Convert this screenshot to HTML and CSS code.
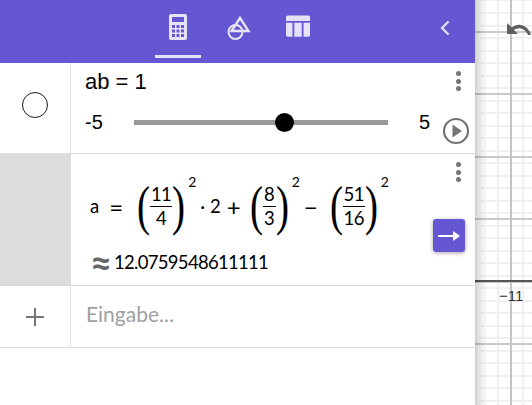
FILE: index.html

```html
<!DOCTYPE html>
<html lang="en">
<head>
  <meta charset="UTF-8">
  <title>Algebra</title>
  <link rel="stylesheet" href="styles.css">
</head>
<body>
  <div class="app">
    <div class="algebra-panel">
      <header class="toolbar">
        <div class="tabs">
          <button class="tab active">
            <svg width="18" height="26" viewBox="0 0 18 26"><path class="tab-icon" d="M2 0h14a2 2 0 0 1 2 2v22a2 2 0 0 1-2 2H2a2 2 0 0 1-2-2V2a2 2 0 0 1 2-2zM3 3v5h12V3zM3 11v3h3v-3zM7.500 11v3h3v-3zM12 11v3h3v-3zM3 15.500v3h3v-3zM7.500 15.500v3h3v-3zM12 15.500v3h3v-3zM3 20v3h3v-3zM7.500 20v3h3v-3zM12 20v3h3v-3z"/></svg>
          </button>
          <button class="tab">
            <svg width="26" height="26" viewBox="0 0 26 26"><circle cx="10.500" cy="18" r="7" fill="none" stroke="#e6e3f8" stroke-width="2"/><path d="M15 4 23.500 17H6.500z" fill="none" stroke="#e6e3f8" stroke-width="2.400"/></svg>
          </button>
          <button class="tab">
            <svg width="24" height="23" viewBox="0 0 26 24"><path class="tab-icon" d="M2 0h22a2 2 0 0 1 2 2v4H0V2a2 2 0 0 1 2-2zM0 8h7v15H2a2 2 0 0 1-2-2zM9 8h8v15H9zM19 8h7v13a2 2 0 0 1-2 2h-5z"/></svg>
          </button>
        </div>
        <svg class="collapse" width="12" height="16" viewBox="0 0 12 16"><path d="M9.500 1.500 3 8l6.500 6.500" fill="none" stroke="#e6e3f8" stroke-width="2.200"/></svg>
      </header>

      <section class="row row-slider">
        <div class="marble-col">
          <span class="marble"></span>
        </div>
        <div class="row-main">
          <div class="slider-label">ab = 1</div>
          <div class="slider-line">
            <span>-5</span>
            <div class="track"><span class="thumb"></span></div>
            <span>5</span>
          </div>
        </div>
        <div class="row-side">
          <span class="dots"><i></i><i></i><i></i></span>
          <svg class="play" width="28" height="28" viewBox="0 0 28 28"><circle cx="14" cy="14" r="12" fill="none" stroke="#757575" stroke-width="2.200"/><path d="M10.500 7.500 20 14l-9.500 6.500z" fill="#757575"/></svg>
        </div>
      </section>

      <section class="row row-formula">
        <div class="marble-col grey"></div>
        <div class="row-main">
          <div class="formula">
            <span class="var">a</span>
            <span class="eq">=</span>
            <span class="paren">(</span>
            <span class="frac frac-wide"><span>11</span><span class="den">4</span></span>
            <span class="paren">)</span>
            <sup class="pow">2</sup>
            <span class="dot">·</span>
            <span class="num">2</span>
            <span class="op plus">+</span>
            <span class="paren">(</span>
            <span class="frac"><span>8</span><span class="den">3</span></span>
            <span class="paren">)</span>
            <sup class="pow">2</sup>
            <span class="op minus">−</span>
            <span class="paren">(</span>
            <span class="frac frac-wide"><span>51</span><span class="den">16</span></span>
            <span class="paren">)</span>
            <sup class="pow">2</sup>
          </div>
          <div class="result"><span class="approx">≈</span>12.0759548611111</div>
        </div>
        <div class="row-side">
          <span class="dots"><i></i><i></i><i></i></span>
          <button class="arrow-btn">
            <svg width="22" height="10" viewBox="0 0 22 10"><path d="M0 4h15V0l7 5-7 5V6H0z" fill="#fff"/></svg>
          </button>
        </div>
      </section>

      <section class="row row-input">
        <div class="marble-col">
          <svg width="20" height="20" viewBox="0 0 20 20"><path d="M9 1h2v8h8v2h-8v8H9v-8H1V9h8z" fill="#757575"/></svg>
        </div>
        <div class="placeholder">Eingabe...</div>
      </section>
    </div>

    <div class="graphics">
      <svg class="undo" width="26" height="22" viewBox="0 0 26 22"><path d="M1 2v11h11L8 9c3-2.500 9-3 13 3l1 2h3C22 4 12 1 6 6.500z" fill="#5f5f5f"/></svg>
      <span class="tick">−11</span>
    </div>
  </div>
</body>
</html>
```

FILE: styles.css

```css
html, body {
  margin: 0;
  height: 100%;
  overflow: hidden;
  background: #fff;
}
.app {
  display: flex;
  width: 532px;
  height: 405px;
  font-family: "Liberation Sans", sans-serif;
  color: #000;
}
.algebra-panel {
  width: 475px;
  flex: none;
  display: flex;
  flex-direction: column;
}

/* Top toolbar */
.toolbar {
  height: 63px;
  flex: none;
  background-color: #6557d2;
  display: flex;
  align-items: center;
  position: relative;
}
.tabs {
  display: flex;
  margin-left: 155px;
  gap: 14px;
}
.tab {
  width: 46px;
  height: 51px;
  margin-top: 1px;
  padding: 0 0 8px;
  border: none;
  border-bottom: 3px solid transparent;
  background: transparent;
  display: flex;
  align-items: center;
  justify-content: center;
}
.tab.active {
  border-bottom-color: #e6e3f8;
}
.tab-icon {
  fill: #e6e3f8;
  fill-rule: evenodd;
}
.collapse {
  position: absolute;
  left: 439px;
  top: 20px;
}

/* Rows */
.row {
  display: flex;
  border-bottom: 1px solid #dcdcdc;
  box-sizing: border-box;
}
.row-slider {
  height: 91px;
}
.row-formula {
  height: 132px;
}
.row-input {
  height: 62px;
}
.marble-col {
  width: 70px;
  flex: none;
  border-right: 1px solid #dcdcdc;
  display: flex;
  align-items: center;
  justify-content: center;
}
.marble-col.grey {
  background-color: #dcdcdc;
}
.marble {
  width: 24px;
  height: 24px;
  margin-bottom: 6px;
  border: 1px solid #1a1a1a;
  border-radius: 50%;
}
.row-main {
  flex: 1;
  min-width: 0;
  padding-left: 14px;
}
.row-side {
  width: 34px;
  flex: none;
  display: flex;
  flex-direction: column;
  align-items: center;
}
.dots {
  display: flex;
  flex-direction: column;
  gap: 2.500px;
  margin-top: 8px;
}
.dots i {
  display: block;
  width: 5px;
  height: 5px;
  border-radius: 50%;
  background-color: #757575;
}

/* Slider row */
.slider-label {
  font-size: 22px;
  line-height: 24px;
  margin-top: 7px;
}
.slider-line {
  display: flex;
  align-items: center;
  width: 345px;
  margin-top: 17px;
  font-size: 20px;
  line-height: 22px;
}
.track {
  flex: 1;
  height: 5px;
  margin: 0 31px;
  background-color: #999;
  position: relative;
}
.thumb {
  position: absolute;
  left: 141px;
  top: -7px;
  width: 19px;
  height: 19px;
  border-radius: 50%;
  background-color: #000;
}
.play {
  margin: 26px 4px 0 0;
}

/* Formula row */
.formula {
  display: flex;
  align-items: center;
  height: 52px;
  margin-top: 26px;
  padding-left: 5px;
  font-family: "Lato", sans-serif;
  font-size: 18.500px;
  white-space: nowrap;
}
.eq {
  font-size: 24px;
  margin-left: 10px;
  margin-right: 14px;
}
.paren {
  width: 13px;
  display: flex;
  justify-content: center;
  font-family: "Liberation Serif", serif;
  font-size: 34px;
  line-height: 52px;
  transform: scale(1.15, 1.62);
}
.frac {
  width: 13px;
  display: flex;
  flex-direction: column;
  align-items: center;
  line-height: 23px;
  letter-spacing: -0.500px;
}
.frac-wide {
  width: 22px;
}
.den {
  border-top: 1px solid #000;
  align-self: stretch;
  text-align: center;
}
.pow {
  font-size: 14px;
  line-height: 14px;
  align-self: flex-start;
  margin-top: -5px;
  margin-left: 3px;
}
.dot {
  margin-left: 4px;
  margin-right: 5px;
}
.op {
  font-size: 24px;
}
.plus {
  margin-left: 6px;
  margin-right: 9px;
}
.minus {
  margin-left: 4px;
  margin-right: 12px;
}
.result {
  display: flex;
  align-items: center;
  margin-top: 18px;
  padding-left: 5px;
  font-family: "Lato", sans-serif;
  font-size: 18.500px;
  letter-spacing: -0.700px;
  line-height: 24px;
}
.approx {
  width: 24px;
  font-size: 38px;
  font-weight: 700;
  line-height: 24px;
  color: #666;
}
.arrow-btn {
  width: 32px;
  height: 33px;
  margin-top: 37px;
  margin-right: 18px;
  padding: 0;
  border: none;
  border-radius: 3px;
  background-color: #6557d2;
  box-shadow: 0 1px 4px rgba(0,0,0,0.35);
  display: flex;
  align-items: center;
  justify-content: center;
}

/* Input row */
.placeholder {
  padding: 14px 0 0 15px;
  font-family: "Lato", sans-serif;
  font-size: 21px;
  line-height: 28px;
  color: #a0a0a0;
}

/* Graphics view */
.graphics {
  flex: 1;
  position: relative;
  overflow: hidden;
  background-color: #fff;
  background-image:
    linear-gradient(to right, rgba(0,0,0,0.18), rgba(0,0,0,0) 11px),
    linear-gradient(#555, #555),
    linear-gradient(#c4c4c4, #c4c4c4),
    repeating-linear-gradient(to bottom, #c9c9c9 0, #c9c9c9 2px, transparent 2px, transparent 62.500px),
    repeating-linear-gradient(to right, #f0f0f0 0, #f0f0f0 1.500px, transparent 1.500px, transparent 12.500px),
    repeating-linear-gradient(to bottom, #f0f0f0 0, #f0f0f0 1.500px, transparent 1.500px, transparent 12.500px);
  background-size: 100% 100%, 100% 2px, 2px 100%, 100% 100%, 100% 100%, 100% 100%;
  background-position: 0 0, 0 280px, 35px 0, 0 31px, 10px 0, 6px 0;
  background-repeat: no-repeat;
}
.undo {
  position: absolute;
  left: 31px;
  top: 21px;
}
.tick {
  position: absolute;
  left: 24px;
  top: 287px;
  font-size: 15px;
  color: #333;
}
```
